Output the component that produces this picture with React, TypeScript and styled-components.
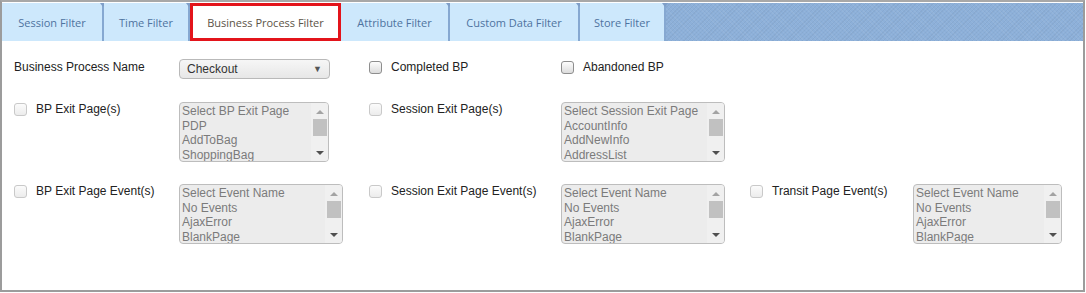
import React from "react";
import styled, { createGlobalStyle } from "styled-components";

const GlobalStyle = createGlobalStyle`
  html, body {
    margin: 0;
    padding: 0;
    background: #fff;
  }
  * {
    box-sizing: border-box;
  }
`;

const Frame = styled.div`
  width: 1085px;
  height: 292px;
  border: 2px solid #9c9c9c;
  border-top-color: #a8a8a8;
  display: flex;
  flex-direction: column;
  background: #fff;
`;

const TabBar = styled.div`
  margin-top: 1px;
  height: 38px;
  display: flex;
  align-items: stretch;
  background-color: #8db0d9;
  background-image: repeating-linear-gradient(
      45deg,
      rgba(255, 255, 255, 0.06) 0 1px,
      transparent 1px 3px
    ),
    repeating-linear-gradient(
      -45deg,
      rgba(0, 0, 0, 0.04) 0 1px,
      transparent 1px 3px
    );
`;

const Tab = styled.div<{ $w: number; $active?: boolean }>`
  position: relative;
  width: ${(p) => p.$w}px;
  flex: none;
  display: flex;
  align-items: center;
  justify-content: center;
  font-family: "Open Sans", "DejaVu Sans", sans-serif;
  font-size: 11px;
  color: ${(p) => (p.$active ? "#5c5346" : "#4e73a0")};
  background: ${(p) => (p.$active ? "#fff" : "#cde8fc")};
  border: ${(p) => (p.$active ? "3px solid #e3141b" : "none")};
  border-right: ${(p) => (p.$active ? "3px solid #e3141b" : "2px solid #86a8d1")};
  padding-top: 1px;
  white-space: nowrap;

  &::after {
    content: "";
    display: ${(p) => (p.$active ? "none" : "block")};
    position: absolute;
    top: 0;
    right: -4px;
    width: 0;
    height: 0;
    border-left: 3px solid transparent;
    border-right: 3px solid transparent;
    border-top: 4px solid #7f9fc8;
  }
`;

const Content = styled.div`
  flex: 1;
  padding: 18px 0 0 12px;
  display: grid;
  grid-template-columns: 165px 190px 192px 189px 163px 1fr;
  grid-template-rows: 21px 60px 60px;
  row-gap: 22px;
  align-items: start;
  font-family: "Liberation Sans", Arial, sans-serif;
  font-size: 12px;
  color: #222;
`;

const Cell = styled.div<{ $offset?: number }>`
  display: flex;
  align-items: flex-start;
  gap: 9px;
  padding-top: ${(p) => p.$offset ?? 0}px;
`;

const Label = styled.span`
  line-height: 14px;
  white-space: nowrap;
`;

const Box = styled.span<{ $faded?: boolean }>`
  flex: none;
  width: 13px;
  height: 13px;
  margin-top: 1px;
  border-radius: 3px;
  border: 1px solid ${(p) => (p.$faded ? "#c9c9c9" : "#8e8e8e")};
  background: ${(p) =>
    p.$faded
      ? "linear-gradient(#fbfbfb, #ececec)"
      : "linear-gradient(#fdfdfd, #dcdcdc)"};
`;

const Select = styled.div`
  width: 151px;
  height: 20px;
  border: 1px solid #b9b9b9;
  border-radius: 4px;
  background: linear-gradient(#f6f6f6, #e7e7e7);
  display: flex;
  align-items: center;
  justify-content: space-between;
  padding: 0 7px 0 7px;
  color: #333;
  line-height: 14px;
`;

const Caret = styled.span`
  font-size: 9px;
  color: #555;
`;

const ListBox = styled.div<{ $w: number }>`
  width: ${(p) => p.$w}px;
  height: 60px;
  border: 1px solid #bdbdbd;
  border-radius: 4px;
  background: #ececec;
  display: flex;
  overflow: hidden;
`;

const Options = styled.div`
  flex: 1;
  padding: 1px 0 0 2px;
  color: #7b7b7b;
  line-height: 14.5px;
  white-space: nowrap;
  overflow: hidden;
`;

const Scroll = styled.div`
  width: 17px;
  flex: none;
  background: #f0f0f0;
  display: flex;
  flex-direction: column;
  align-items: center;
  padding: 0 1px;
`;

const Arrow = styled.span<{ $down?: boolean }>`
  margin-top: ${(p) => (p.$down ? "auto" : "7px")};
  margin-bottom: ${(p) => (p.$down ? "6px" : "0")};
  width: 0;
  height: 0;
  border-left: 4px solid transparent;
  border-right: 4px solid transparent;
  ${(p) =>
    p.$down
      ? "border-top: 4px solid #505050;"
      : "border-bottom: 4px solid #a3a3a3;"}
`;

const Thumb = styled.span`
  width: 14px;
  height: 17px;
  margin-top: 5px;
  background: #c1c1c1;
`;

const tabs = [
  { name: "Session Filter", w: 102 },
  { name: "Time Filter", w: 86 },
  { name: "Business Process Filter", w: 151, active: true },
  { name: "Attribute Filter", w: 109 },
  { name: "Custom Data Filter", w: 130 },
  { name: "Store Filter", w: 86 },
];

const exitPages = ["Select BP Exit Page", "PDP", "AddToBag", "ShoppingBag"];
const sessionPages = ["Select Session Exit Page", "AccountInfo", "AddNewInfo", "AddressList"];
const events = ["Select Event Name", "No Events", "AjaxError", "BlankPage"];

function List({ items, w }: { items: string[]; w: number }) {
  return (
    <ListBox $w={w}>
      <Options>
        {items.map((i) => (
          <div key={i}>{i}</div>
        ))}
      </Options>
      <Scroll>
        <Arrow />
        <Thumb />
        <Arrow $down />
      </Scroll>
    </ListBox>
  );
}

function Check({ label, faded, offset }: { label: string; faded?: boolean; offset?: number }) {
  return (
    <Cell $offset={offset}>
      <Box $faded={faded} />
      <Label>{label}</Label>
    </Cell>
  );
}

export default function App() {
  return (
    <>
      <GlobalStyle />
      <Frame>
        <TabBar>
          {tabs.map((t) => (
            <Tab key={t.name} $w={t.w} $active={t.active}>
              {t.name}
            </Tab>
          ))}
        </TabBar>
        <Content>
          <Cell $offset={1}>
            <Label>Business Process Name</Label>
          </Cell>
          <Cell>
            <Select>
              <span>Checkout</span>
              <Caret>▼</Caret>
            </Select>
          </Cell>
          <Check label="Completed BP" offset={1} />
          <Check label="Abandoned BP" offset={1} />
          <div />
          <div />

          <Check label="BP Exit Page(s)" faded />
          <List items={exitPages} w={150} />
          <Check label="Session Exit Page(s)" faded />
          <List items={sessionPages} w={164} />
          <div />
          <div />

          <Check label="BP Exit Page Event(s)" faded />
          <List items={events} w={164} />
          <Check label="Session Exit Page Event(s)" faded />
          <List items={events} w={164} />
          <Check label="Transit Page Event(s)" faded />
          <List items={events} w={149} />
        </Content>
      </Frame>
    </>
  );
}
